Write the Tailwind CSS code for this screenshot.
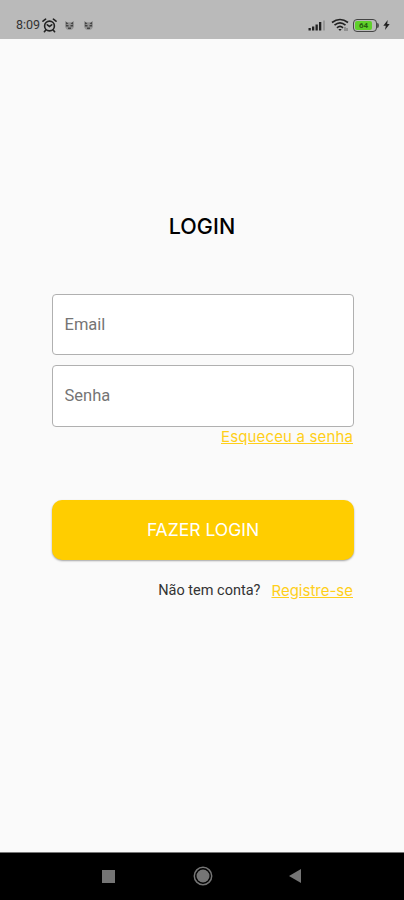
<!DOCTYPE html>
<html lang="pt-BR">
<head>
    <meta charset="utf-8">
    <meta name="viewport" content="width=device-width, initial-scale=1">
    <title>Login</title>
    <script src="https://cdn.jsdelivr.net/npm/@tailwindcss/browser@4"></script>
</head>
<body class="h-[900px] w-[404px] flex flex-col overflow-hidden bg-[#fafafa] font-['Roboto',sans-serif]">

    <!-- Status bar -->
    <header class="h-[39px] shrink-0 flex items-end justify-between bg-[#bababa] pl-4 pr-[14px] pb-[6px] text-[#333]">
        <div class="flex items-center h-4">
            <span class="w-[25px] text-[12.5px] leading-4 whitespace-nowrap">8:09</span>
            <svg class="w-[15px] h-[15px] ml-[1px]" viewBox="0 0 15 15" fill="none" stroke="#222" stroke-width="1.6">
                <circle cx="7.5" cy="8" r="4.9"/>
                <path d="M1 3.2 3.6 1.2M14 3.2l-2.6-2M3.8 12l-1.4 1.7M11.2 12l1.4 1.7M5.3 6.8l2.2 1.7 2.2-1.7" stroke-linecap="round"/>
            </svg>
            <svg class="w-[11px] h-[11px] ml-[7px]" viewBox="0 0 11 11" fill="#444">
                <path d="M1 1l2.5 1.2h4L10 1v5.5Q9 10 5.5 10T1 6.5z" fill="#929292"/>
                <path d="M2 2l2.5 1.5L2 4.5zM9 2 6.5 3.5 9 4.5zM2 5h2.5v1.6H2zM6.5 5H9v1.6H6.5zM4 7.5h3V9H4z"/>
            </svg>
            <svg class="w-[11px] h-[11px] ml-2" viewBox="0 0 11 11" fill="#444">
                <path d="M1 1l2.5 1.2h4L10 1v5.5Q9 10 5.5 10T1 6.5z" fill="#929292"/>
                <path d="M2 2l2.5 1.5L2 4.5zM9 2 6.5 3.5 9 4.5zM2 5h2.5v1.6H2zM6.5 5H9v1.6H6.5zM4 7.5h3V9H4z"/>
            </svg>
        </div>
        <div class="flex items-center h-4">
            <svg class="w-[18px] h-3" viewBox="0 0 18 12">
                <path d="M.5 9h2.3v2.5H.5zM4 7.5h2.3v4H4zM7.5 5.5h2.3v6H7.5zM11 3h2.3v8.5H11z" fill="#222"/>
                <path d="M15 1.5h2v10h-2z" fill="#999"/>
            </svg>
            <svg class="w-[18px] h-[14px] ml-[5px]" viewBox="0 0 18 14" fill="none" stroke="#222" stroke-width="1.7">
                <path d="M1 4.5Q9-1.5 17 4.5M3.5 7.2Q9 2.5 14.5 7.2M6 9.8Q9 7 12 9.8"/>
                <path d="M7.3 11h3.4L9 13z" fill="#222" stroke="none"/>
                <path d="M14 9v4M16 10v3" stroke="#666" stroke-width="1"/>
            </svg>
            <div class="ml-[4px] flex items-center">
                <div class="w-[24px] h-[13px] rounded-[4px] border-[1.5px] border-[#444] p-[1px]">
                    <div class="h-full w-[17px] rounded-[2px] bg-[#5fd02a] text-center text-[8px] leading-[9px] font-bold text-[#286010]">64</div>
                </div>
                <div class="w-[2px] h-[5px] rounded-r-sm bg-[#555]"></div>
            </div>
            <svg class="w-[7px] h-[10px] ml-[4px]" viewBox="0 0 7 10" fill="#222">
                <path d="M4.7 0 .3 5.7h2.5L2 10l4.7-6H4.2z"/>
            </svg>
        </div>
    </header>

    <!-- Login form -->
    <main class="flex-1 flex flex-col pl-[52px] pr-[50px] pt-[172px]">
        <h1 class="h-[30px] pr-[2px] text-center text-[21.5px] leading-[30px] tracking-[0.1px] font-medium text-black font-['Inter',sans-serif]">LOGIN</h1>

        <form class="mt-[53px] flex flex-col">
            <input type="email" placeholder="Email" aria-label="Email" class="h-[61px] rounded-[4px] border border-[#b0b0b0] bg-white px-[11.5px] text-[16.5px] placeholder:text-[#757575] outline-none">
            <input type="password" placeholder="Senha" aria-label="Senha" class="mt-[10px] h-[62px] rounded-[4px] border border-[#b0b0b0] bg-white px-[11.5px] pb-[2px] text-[16.5px] placeholder:text-[#757575] outline-none">
            <a href="#" class="self-end mr-[1px] -mt-px text-[15px] leading-[21px] tracking-[0.15px] text-[#ffcf19] underline font-['Inter',sans-serif]">Esqueceu a senha</a>
            <button type="button" class="mt-[53px] h-[60px] rounded-[10px] bg-[#ffcd00] shadow-[0_1px_2px_rgba(0,0,0,0.35)] text-[17.5px] text-white font-['Inter',sans-serif]">FAZER LOGIN</button>
        </form>

        <div class="mt-5 mr-[1px] flex justify-end items-center leading-[21px]">
            <span class="text-[14.5px] text-[#333]">Não tem conta?</span>
            <a href="#" class="ml-[11px] text-[15px] text-[#ffcf19] underline font-['Inter',sans-serif]">Registre-se</a>
        </div>
    </main>

    <!-- Navigation bar -->
    <nav class="h-12 shrink-0 flex items-center border-t border-[#777] bg-black pl-[102px] pb-px text-[#757575]">
        <div class="w-[13px] h-[13px] bg-[#757575]"></div>
        <svg class="w-5 h-5 ml-[78px]" viewBox="0 0 20 20">
            <circle cx="10" cy="10" r="8.7" fill="none" stroke="#757575" stroke-width="1.5"/>
            <circle cx="10" cy="10" r="6.5" fill="#757575"/>
        </svg>
        <svg class="w-3 h-[14px] ml-[76px]" viewBox="0 0 12 14" fill="#757575">
            <path d="M12 0v14L0 7z"/>
        </svg>
    </nav>
</body>
</html>
